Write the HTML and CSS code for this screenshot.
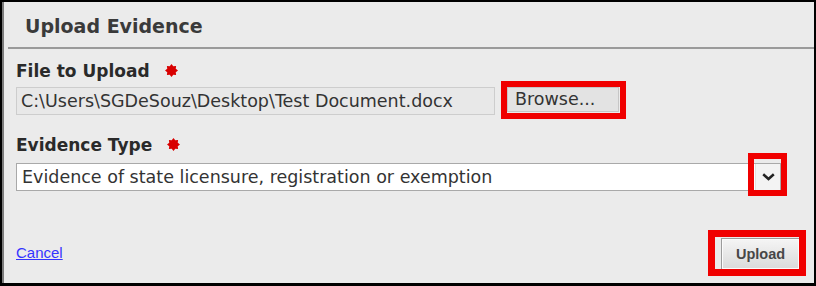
FILE: index.html
```html
<!DOCTYPE html>
<html lang="en">
<head>
<meta charset="utf-8">
<title>Upload Evidence</title>
<link rel="stylesheet" href="styles.css">
</head>
<body>
<section class="panel">
  <header class="panel-head"><h1 class="panel-title">Upload Evidence</h1></header>
  <div class="panel-body">
    <div class="label">File to Upload
      <svg class="req" width="13" height="13" viewBox="0 0 13 13"><polygon points="6.5,0 8.26,2.25 11.1,1.9 10.75,4.74 13,6.5 10.75,8.26 11.1,11.1 8.26,10.75 6.5,13 4.74,10.75 1.9,11.1 2.25,8.26 0,6.5 2.25,4.74 1.9,1.9 4.74,2.25"/></svg>
    </div>
    <div class="file-row">
      <div class="file-path">C:\Users\SGDeSouz\Desktop\Test Document.docx</div>
      <button class="browse marked mark-browse">Browse...</button>
    </div>
    <div class="label label-second">Evidence Type
      <svg class="req" width="13" height="13" viewBox="0 0 13 13"><polygon points="6.5,0 8.26,2.25 11.1,1.9 10.75,4.74 13,6.5 10.75,8.26 11.1,11.1 8.26,10.75 6.5,13 4.74,10.75 1.9,11.1 2.25,8.26 0,6.5 2.25,4.74 1.9,1.9 4.74,2.25"/></svg>
    </div>
    <div class="select">
      <span class="select-text">Evidence of state licensure, registration or exemption</span>
      <span class="select-arrow marked mark-arrow">
        <svg width="13" height="8" viewBox="0 0 13 8"><path d="M1.2 1.2 L6.5 6 L11.8 1.2" fill="none" stroke="#222" stroke-width="2.5"/></svg>
      </span>
    </div>
  </div>
  <footer class="panel-foot">
    <a class="cancel" href="#">Cancel</a>
    <button class="upload marked mark-upload">Upload</button>
  </footer>
</section>
</body>
</html>
```
FILE: styles.css
```css
html, body {
  margin: 0;
  padding: 0;
}
body {
  background: #000;
  width: 816px;
  height: 286px;
  overflow: hidden;
  font-family: "DejaVu Sans", Verdana, sans-serif;
}
.panel {
  margin: 2px 2px 3px 2px;
  height: 281px;
  box-sizing: border-box;
  border-left: 2px solid #7c7c7c;
  background: #ebebeb;
  overflow: hidden;
}
.panel-head {
  margin-left: 4px;
  height: 47px;
  box-sizing: border-box;
  border-bottom: 2px solid #9a9a9a;
  padding: 13px 0 0 17px;
}
.panel-title {
  margin: 0;
  font-size: 19px;
  line-height: 22px;
  font-weight: bold;
  color: #3a3a3a;
}
.panel-body {
  padding-left: 12px;
}
.label {
  display: flex;
  align-items: center;
  gap: 15px;
  margin-top: 12px;
  height: 20px;
  font-size: 17px;
  line-height: 20px;
  font-weight: bold;
  color: #2a2a2a;
}
.label-second {
  margin-top: 20px;
}
.req {
  fill: #d80000;
  margin-top: -1px;
}
.file-row {
  display: flex;
  align-items: flex-start;
  gap: 12px;
  margin-top: 6px;
}
.file-path {
  width: 479px;
  height: 28px;
  box-sizing: border-box;
  border: 1px solid #cdcdcd;
  background: #e8e8e8;
  padding: 0 4px;
  font-size: 17.5px;
  line-height: 27px;
  color: #333;
  white-space: nowrap;
  overflow: hidden;
}
.browse {
  width: 112px;
  height: 25px;
  box-sizing: border-box;
  border: 1px solid #c6c6c6;
  background: #e3e3e3;
  padding: 0 0 0 7px;
  margin: 0;
  text-align: left;
  font-family: "DejaVu Sans", Verdana, sans-serif;
  font-size: 17.5px;
  line-height: 23px;
  color: #333;
}
.marked {
  position: relative;
}
.marked::after {
  content: "";
  position: absolute;
  border: 6px solid #f00000;
  pointer-events: none;
}
.mark-browse::after {
  left: -7px;
  top: -7px;
  right: -8px;
  bottom: -8px;
}
.select {
  display: flex;
  margin-top: 8px;
  width: 765px;
  height: 28px;
  box-sizing: border-box;
  border: 1px solid #a9a9a9;
  background: #fff;
}
.select-text {
  flex: 1;
  padding-left: 5px;
  font-size: 17.5px;
  line-height: 26px;
  color: #333;
  white-space: nowrap;
}
.select-arrow {
  width: 24px;
  display: flex;
  align-items: center;
  justify-content: center;
  background: #f3f3f3;
  border-left: 1px solid #e0e0e0;
}
.mark-arrow::after {
  left: -8px;
  top: -11px;
  right: -7px;
  bottom: -6px;
}
.panel-foot {
  display: flex;
  justify-content: space-between;
  align-items: center;
  margin-top: 47px;
  padding: 0 14px 0 12px;
}
.cancel {
  font-family: "Liberation Sans", Arial, sans-serif;
  font-size: 15px;
  color: #3434ff;
  text-decoration: underline;
  margin-top: -3px;
}
.upload {
  width: 79px;
  height: 32px;
  box-sizing: border-box;
  border: 1px solid #9c9c9c;
  background: linear-gradient(#f5f5f5, #dadada);
  box-shadow: inset 0 0 0 1px #fbfbfb;
  padding: 0;
  margin: 0;
  font-family: "Liberation Sans", Arial, sans-serif;
  font-size: 14.5px;
  font-weight: bold;
  color: #474747;
}
.mark-upload::after {
  border-width: 7px;
  left: -14px;
  top: -9px;
  right: -7px;
  bottom: -7px;
}
```
